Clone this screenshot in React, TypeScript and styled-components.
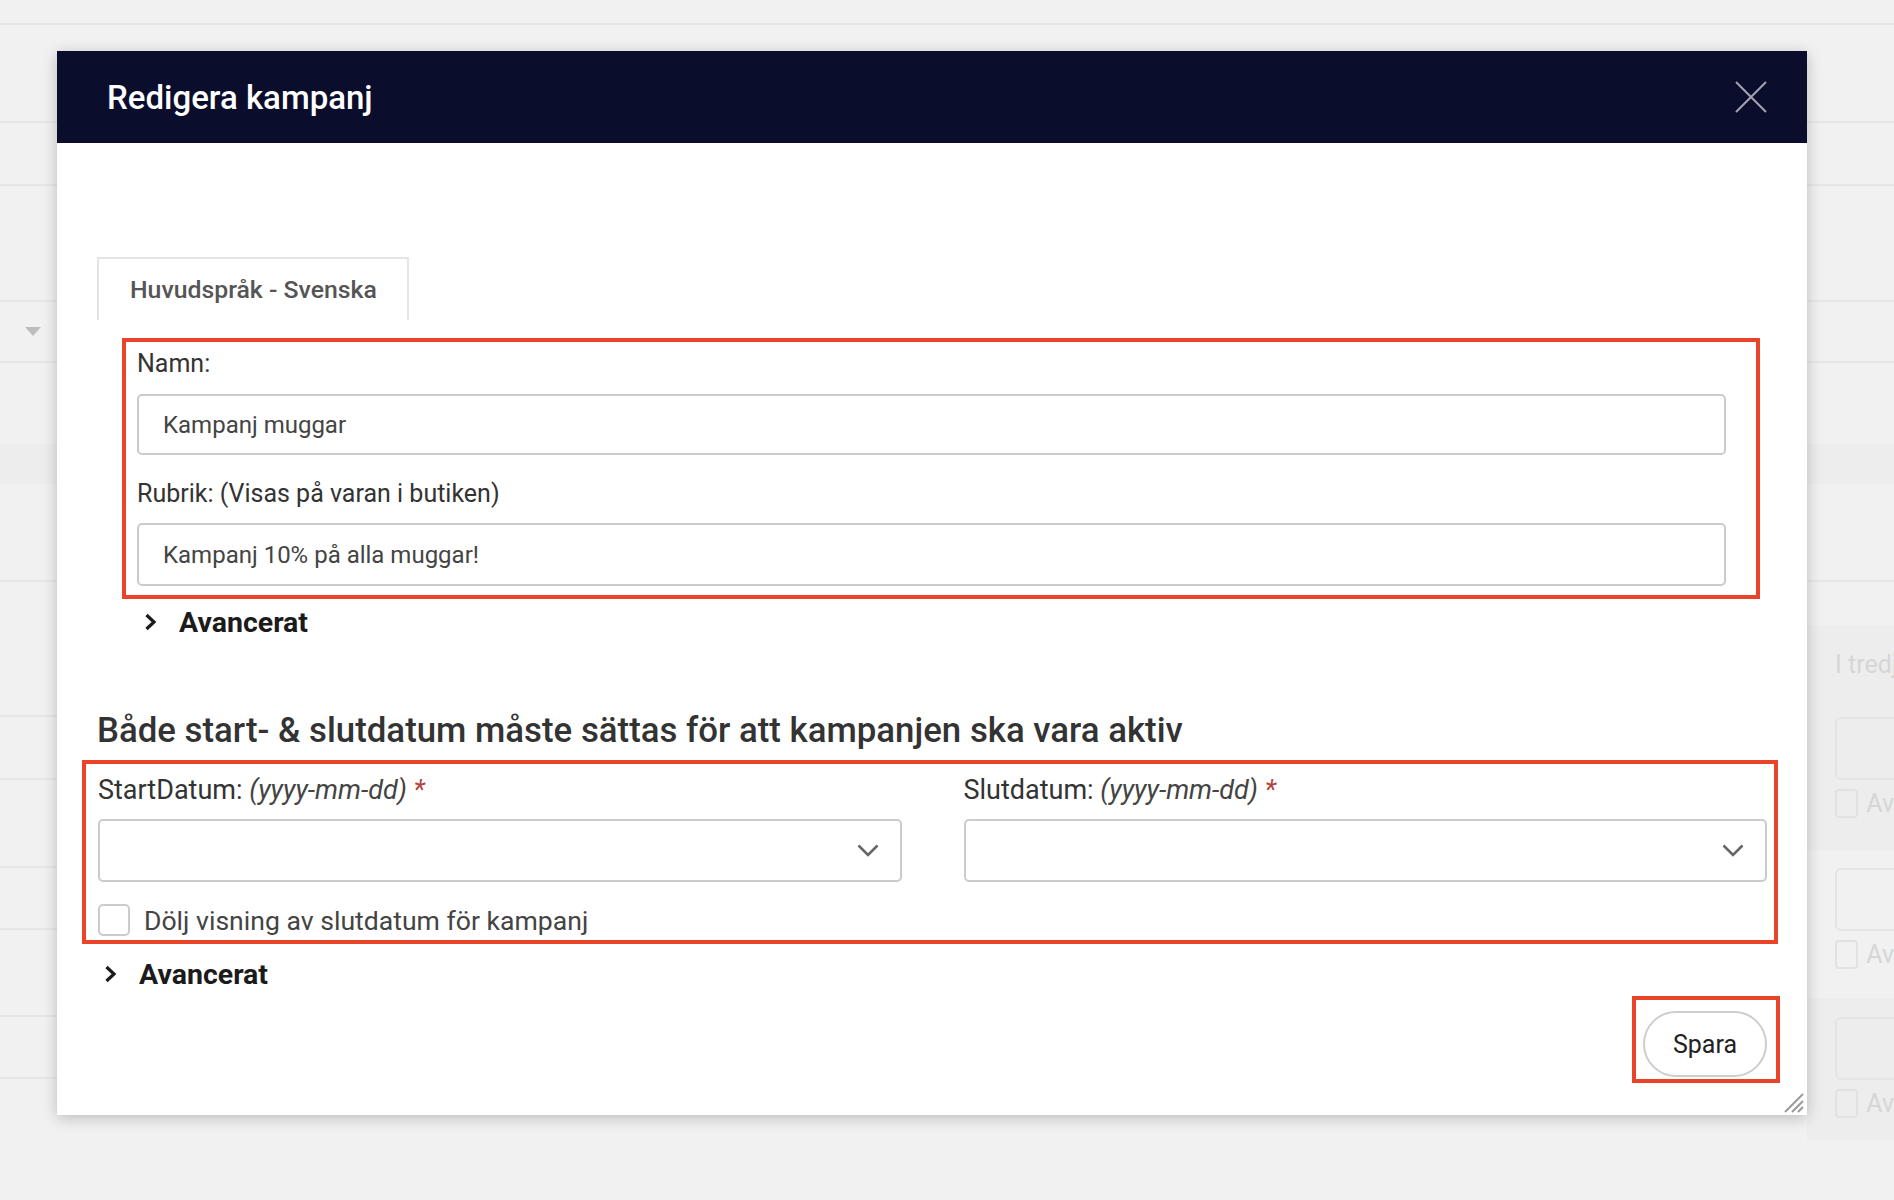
import React from "react";
import styled, { createGlobalStyle } from "styled-components";

const GlobalStyle = createGlobalStyle`
  html, body {
    margin: 0;
    padding: 0;
    background: #f1f1f1;
    font-family: Roboto, "Liberation Sans", Arial, sans-serif;
  }
  * {
    box-sizing: border-box;
  }
`;

const Screen = styled.div`
  position: relative;
  width: 1894px;
  height: 1200px;
  overflow: hidden;
  background: #f1f1f1;
`;

/* ---------- page behind the modal ---------- */

const Backdrop = styled.div`
  display: flex;
  flex-direction: column;
  width: 100%;
  height: 100%;
`;

const BgRow = styled.div<{ $h: number; $band?: boolean; $line?: boolean }>`
  display: flex;
  align-items: center;
  height: ${(p) => p.$h}px;
  flex-shrink: 0;
  background: ${(p) => (p.$band ? "#ededed" : "transparent")};
  border-bottom: ${(p) => (p.$line === false ? "none" : "2px solid #e6e6e6")};
`;

const SortArrow = styled.span`
  margin-left: 25px;
  width: 0;
  height: 0;
  border-left: 8px solid transparent;
  border-right: 8px solid transparent;
  border-top: 9px solid #bdbdbd;
`;

const BgLower = styled.div`
  display: flex;
  flex: 1;
`;

const LeftRail = styled.div`
  display: flex;
  flex-direction: column;
  width: 57px;
`;

const Middle = styled.div`
  flex: 1;
`;

const RightRail = styled.div`
  display: flex;
  flex-direction: column;
  width: 87px;
  overflow: hidden;
`;

const RailBlock = styled.div<{ $h: number; $band?: boolean; $top?: number }>`
  display: flex;
  flex-direction: column;
  height: ${(p) => p.$h}px;
  padding: ${(p) => p.$top ?? 0}px 0 0 28px;
  background: ${(p) => (p.$band ? "#ededed" : "transparent")};
`;

const FaintText = styled.div`
  font-size: 25px;
  line-height: 30px;
  color: #d6d6d6;
  white-space: nowrap;
  margin-bottom: 37px;
`;

const FaintInput = styled.div`
  height: 63px;
  width: 120px;
  border: 2px solid #e4e4e4;
  border-radius: 6px;
`;

const FaintCheck = styled.div`
  display: flex;
  align-items: center;
  gap: 8px;
  margin-top: 9px;
  font-size: 25px;
  color: #d6d6d6;
  white-space: nowrap;

  &::before {
    content: "";
    width: 25px;
    height: 25px;
    border: 2px solid #e2e2e2;
    border-radius: 4px;
  }
`;

/* ---------- modal ---------- */

const Modal = styled.div`
  position: absolute;
  left: 57px;
  top: 51px;
  width: 1750px;
  height: 1064px;
  background: #fff;
  box-shadow: 0 3px 14px rgba(0, 0, 0, 0.22);
  display: flex;
  flex-direction: column;
`;

const Header = styled.div`
  height: 92px;
  flex-shrink: 0;
  background: #0b0d2c;
  display: flex;
  align-items: center;
  justify-content: space-between;
  padding: 0 40px 0 50px;
`;

const Title = styled.h2`
  margin: 0;
  font-size: 33px;
  font-weight: 500;
  color: #fff;
  line-height: 1;
`;

const CloseButton = styled.button`
  width: 32px;
  height: 32px;
  padding: 0;
  border: none;
  background: transparent;
  display: flex;
`;

const Body = styled.div`
  display: flex;
  flex-direction: column;
  padding: 114px 40px 0 40px;
  flex: 1;
`;

const TabBar = styled.div`
  display: flex;
`;

const Tab = styled.div`
  height: 63px;
  display: flex;
  align-items: center;
  padding: 0 30px 0 31px;
  border: 2px solid #e4e4e4;
  border-bottom: none;
  font-size: 24.8px;
  font-weight: 500;
  color: #555;
`;

const Highlight = styled.div<{ $m: string; $p: string }>`
  border: 4px solid #e9432a;
  margin: ${(p) => p.$m};
  padding: ${(p) => p.$p};
`;

const FieldLabel = styled.label<{ $size?: number }>`
  display: block;
  font-size: ${(p) => p.$size ?? 25}px;
  line-height: ${(p) => (p.$size ?? 25) + 5}px;
  color: #333;
`;

const Hint = styled.em`
  color: #444;
`;

const Required = styled.em`
  color: #b5443f;
`;

const Spacer = styled.div<{ $h: number }>`
  height: ${(p) => p.$h}px;
`;

const TextInput = styled.div<{ $h: number }>`
  height: ${(p) => p.$h}px;
  border: 2px solid #cbcbcb;
  border-radius: 5px;
  display: flex;
  align-items: center;
  padding: 0 24px;
  font-size: 24px;
  color: #444;
`;

const Advanced = styled.div<{ $indent: number; $top: number }>`
  display: flex;
  align-items: center;
  gap: 22px;
  height: 32px;
  margin: ${(p) => p.$top}px 0 0 ${(p) => p.$indent}px;
  font-size: 28.5px;
  font-weight: 700;
  color: #1b1b1b;
`;

const SectionHeading = styled.h3`
  margin: 73px 0 0 0;
  font-size: 34.8px;
  line-height: 39px;
  font-weight: 500;
  color: #333;
`;

const DateGrid = styled.div`
  display: grid;
  grid-template-columns: 1fr 1fr;
  column-gap: 62px;
`;

const DateField = styled.div`
  display: flex;
  flex-direction: column;
  gap: 13px;
`;

const SelectBox = styled.div`
  height: 63px;
  border: 2px solid #cbcbcb;
  border-radius: 5px;
  display: flex;
  align-items: center;
  justify-content: flex-end;
  padding-right: 21px;
`;

const CheckRow = styled.div`
  display: flex;
  align-items: center;
  gap: 14px;
  margin-top: 22px;
  height: 32px;
  font-size: 26.6px;
  color: #444;
`;

const CheckBox = styled.span`
  width: 32px;
  height: 32px;
  border: 2px solid #cbcbcb;
  border-radius: 5px;
`;

const Footer = styled.div`
  display: flex;
  justify-content: flex-end;
  margin: 6px -13px 0 0;
`;

const SaveButton = styled.button`
  width: 124px;
  height: 66px;
  border: 2px solid #cdcdcd;
  border-radius: 33px;
  background: #fff;
  font-family: inherit;
  font-size: 25px;
  color: #222;
`;

const ResizeGrip = styled.svg`
  position: absolute;
  right: 3px;
  bottom: 2px;
`;

const Chevron = () => (
  <svg width="13" height="18" viewBox="0 0 13 18">
    <path d="M2.5 2 L10 9 L2.5 16" fill="none" stroke="#1b1b1b" strokeWidth="3.2" />
  </svg>
);

const SelectArrow = () => (
  <svg width="22" height="13" viewBox="0 0 22 13">
    <path d="M1.5 1.5 L11 11 L20.5 1.5" fill="none" stroke="#666" strokeWidth="2.6" />
  </svg>
);

const App = () => {
  return (
    <Screen>
      <GlobalStyle />
      <Backdrop>
        <BgRow $h={25} />
        <BgRow $h={98} />
        <BgRow $h={63} />
        <BgRow $h={116} />
        <BgRow $h={61}>
          <SortArrow />
        </BgRow>
        <BgRow $h={81} $line={false} />
        <BgRow $h={40} $band $line={false} />
        <BgRow $h={98} />
        <BgLower>
          <LeftRail>
            <BgRow $h={135} />
            <BgRow $h={63} />
            <BgRow $h={88} />
            <BgRow $h={62} />
            <BgRow $h={87} />
            <BgRow $h={62} />
          </LeftRail>
          <Middle />
          <RightRail>
            <RailBlock $h={43} />
            <RailBlock $h={226} $band $top={25}>
              <FaintText>I tredj</FaintText>
              <FaintInput />
              <FaintCheck>Av</FaintCheck>
            </RailBlock>
            <RailBlock $h={147} $top={17}>
              <FaintInput />
              <FaintCheck>Av</FaintCheck>
            </RailBlock>
            <RailBlock $h={142} $band $top={19}>
              <FaintInput />
              <FaintCheck>Av</FaintCheck>
            </RailBlock>
          </RightRail>
        </BgLower>
      </Backdrop>

      <Modal>
        <Header>
          <Title>Redigera kampanj</Title>
          <CloseButton aria-label="Stäng">
            <svg width="32" height="32" viewBox="0 0 32 32">
              <path d="M1 1 L31 31 M31 1 L1 31" stroke="#a4a4b0" strokeWidth="2" />
            </svg>
          </CloseButton>
        </Header>

        <Body>
          <TabBar>
            <Tab>Huvudspråk - Svenska</Tab>
          </TabBar>

          <Highlight $m="18px 7px 0 25px" $p="7px 30px 9px 11px">
            <FieldLabel>Namn:</FieldLabel>
            <Spacer $h={15} />
            <TextInput $h={61}>Kampanj muggar</TextInput>
            <Spacer $h={24} />
            <FieldLabel>Rubrik: (Visas på varan i butiken)</FieldLabel>
            <Spacer $h={14} />
            <TextInput $h={63}>Kampanj 10% på alla muggar!</TextInput>
          </Highlight>

          <Advanced $indent={47} $top={7}>
            <Chevron />
            Avancerat
          </Advanced>

          <SectionHeading>
            Både start- &amp; slutdatum måste sättas för att kampanjen ska vara aktiv
          </SectionHeading>

          <Highlight $m="10px -11px 0 -15px" $p="10px 7px 4px 12px">
            <DateGrid>
              <DateField>
                <FieldLabel $size={27}>
                  StartDatum: <Hint>(yyyy-mm-dd)</Hint> <Required>*</Required>
                </FieldLabel>
                <SelectBox>
                  <SelectArrow />
                </SelectBox>
              </DateField>
              <DateField>
                <FieldLabel $size={27}>
                  Slutdatum: <Hint>(yyyy-mm-dd)</Hint> <Required>*</Required>
                </FieldLabel>
                <SelectBox>
                  <SelectArrow />
                </SelectBox>
              </DateField>
            </DateGrid>
            <CheckRow>
              <CheckBox />
              Dölj visning av slutdatum för kampanj
            </CheckRow>
          </Highlight>

          <Advanced $indent={7} $top={14}>
            <Chevron />
            Avancerat
          </Advanced>

          <Footer>
            <Highlight $m="0" $p="11px 9px 2px 7px">
              <SaveButton>Spara</SaveButton>
            </Highlight>
          </Footer>
        </Body>

        <ResizeGrip width="22" height="22" viewBox="0 0 22 22">
          <path
            d="M21 3 L3 21 M21 10 L10 21 M21 16 L16 21"
            stroke="#9a9a9a"
            strokeWidth="2"
          />
        </ResizeGrip>
      </Modal>
    </Screen>
  );
};

export default App;
